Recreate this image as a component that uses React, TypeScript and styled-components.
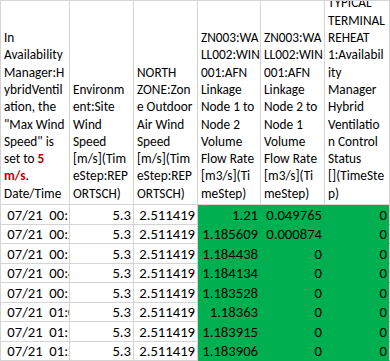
import styled, { createGlobalStyle } from "styled-components";
import { Fragment, type ReactNode } from "react";

const GlobalStyle = createGlobalStyle`
  html, body {
    margin: 0;
    padding: 0;
    background: #ffffff;
  }
  body {
    font-family: Carlito, Lato, "Liberation Sans", sans-serif;
    color: #000;
  }
`;

const GRID = "#d4d4d4";
const GREEN = "#00b050";

const widths = [69, 64, 64, 63, 64, 65];

const Red = styled.b`
  color: #c00000;
  font-weight: 700;
`;

const headers: Array<Array<ReactNode>> = [
  [
    "In",
    "Availability",
    "Manager:H",
    "ybridVentil",
    "ation, the",
    "\"Max Wind",
    "Speed\" is",
    <>
      set to <Red>5</Red>
    </>,
    <>
      <Red>m/s</Red>.
    </>,
    "Date/Time",
  ],
  ["Environm", "ent:Site", "Wind", "Speed", "[m/s](Tim", "eStep:REP", "ORTSCH)"],
  [
    "NORTH",
    "ZONE:Zon",
    "e Outdoor",
    "Air Wind",
    "Speed",
    "[m/s](Tim",
    "eStep:REP",
    "ORTSCH)",
  ],
  [
    "ZN003:WA",
    "LL002:WIN",
    "001:AFN",
    "Linkage",
    "Node 1 to",
    "Node 2",
    "Volume",
    "Flow Rate",
    "[m3/s](Ti",
    "meStep)",
  ],
  [
    "ZN003:WA",
    "LL002:WIN",
    "001:AFN",
    "Linkage",
    "Node 2 to",
    "Node 1",
    "Volume",
    "Flow Rate",
    "[m3/s](Ti",
    "meStep)",
  ],
  [
    "TYPICAL",
    "TERMINAL",
    "REHEAT",
    "1:Availabil",
    "ity",
    "Manager",
    "Hybrid",
    "Ventilatio",
    "n Control",
    "Status",
    "[](TimeSte",
    "p)",
  ],
];

const rows: Array<[string, string, string, string, string, string]> = [
  [" 07/21  00:10:00", "5.3", "2.511419", "1.21", "0.049765", "0"],
  [" 07/21  00:20:00", "5.3", "2.511419", "1.185609", "0.000874", "0"],
  [" 07/21  00:30:00", "5.3", "2.511419", "1.184438", "0", "0"],
  [" 07/21  00:40:00", "5.3", "2.511419", "1.184134", "0", "0"],
  [" 07/21  00:50:00", "5.3", "2.511419", "1.183528", "0", "0"],
  [" 07/21  01:00:00", "5.3", "2.511419", "1.18363", "0", "0"],
  [" 07/21  01:10:00", "5.3", "2.511419", "1.183915", "0", "0"],
  [" 07/21  01:20:00", "5.3", "2.511419", "1.183906", "0", "0"],
];

export default function App() {
  return (
    <>
      <GlobalStyle />
      <Sheet>
        {headers.map((lines, idx) => (
          <HeaderCell key={idx}>
            {lines.map((line, i) => (
              <Line key={i}>{line}</Line>
            ))}
          </HeaderCell>
        ))}
        {rows.map((row, r) => (
          <Fragment key={r}>
            {row.map((value, c) => (
              <DataCell
                key={c}
                $green={c >= 3}
                $text={c === 0}
                $last={c === row.length - 1}
              >
                {value}
              </DataCell>
            ))}
          </Fragment>
        ))}
      </Sheet>
    </>
  );
}

const Sheet = styled.div`
  display: grid;
  grid-template-columns: ${widths.map((w) => w + "px").join(" ")};
  grid-template-rows: 205px repeat(4, 20px 19px);
  width: 390px;
  height: 361px;
  overflow: hidden;
  border-left: 1px solid ${GRID};
  box-sizing: border-box;
  background: #fff;
`;

const HeaderCell = styled.div`
  display: flex;
  flex-direction: column;
  justify-content: flex-end;
  overflow: hidden;
  box-sizing: border-box;
  border-top: 1px solid ${GRID};
  border-right: 1px solid ${GRID};
  border-bottom: 1px solid ${GRID};
  padding: 0 1px 2px 3px;
  font-size: 13.3px;
  line-height: 17.3px;
`;

const Line = styled.div`
  white-space: pre;
`;

const DataCell = styled.div<{ $green: boolean; $text: boolean; $last: boolean }>`
  display: flex;
  align-items: flex-end;
  justify-content: ${(p) => (p.$text ? "flex-start" : "flex-end")};
  overflow: hidden;
  white-space: pre;
  box-sizing: border-box;
  border-right: 1px solid ${(p) => (p.$green && !p.$last ? GREEN : GRID)};
  border-bottom: 1px solid ${(p) => (p.$green ? GREEN : GRID)};
  background: ${(p) => (p.$green ? GREEN : "#fff")};
  padding: 0 2px 0 3px;
  font-size: 14.67px;
  line-height: 18px;
`;
